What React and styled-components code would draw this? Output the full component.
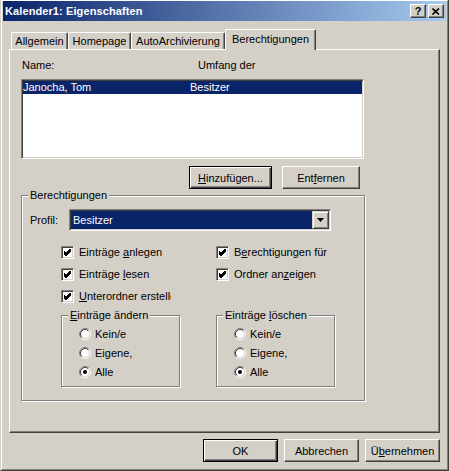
import React from 'react';
import styled, { createGlobalStyle } from 'styled-components';

const FACE = '#d4d0c8';
const NAVY = '#0a246a';

const Global = createGlobalStyle`
  html, body { margin: 0; padding: 0; background: ${FACE}; }
  body { font-family: "Liberation Sans", Arial, sans-serif; font-size: 11px; color: #000; }
  * { box-sizing: border-box; }
`;

const Frame = styled.div`
  width: 449px;
  height: 471px;
  background: ${FACE};
  border-left: 1px solid ${FACE};
  border-right: 1px solid #404040;
  border-bottom: 1px solid #404040;
`;

const FrameInner = styled.div`
  height: 100%;
  display: flex;
  flex-direction: column;
  border-top: 1px solid #fff;
  border-left: 1px solid #fff;
  border-right: 1px solid #808080;
  border-bottom: 1px solid #808080;
  padding: 0 1px;
`;

const TitleBar = styled.div`
  height: 20px;
  flex: none;
  display: flex;
  align-items: center;
  padding: 0 2px 0 2px;
  background: linear-gradient(to right, ${NAVY}, #a6caf0);
  color: #fff;
  font-weight: bold;
  font-size: 11px;
`;

const TitleText = styled.div`
  flex: 1;
  white-space: nowrap;
  letter-spacing: 0.1px;
`;

const CaptionButton = styled.div`
  width: 16px;
  height: 14px;
  margin-left: ${p => p.$gap}px;
  background: ${FACE};
  border: 1px solid;
  border-color: #fff #404040 #404040 #fff;
  box-shadow: inset -1px -1px #808080, inset 1px 1px ${FACE};
  display: flex;
  align-items: center;
  justify-content: center;
  color: #000;
  font-weight: bold;
  font-size: 11px;
  line-height: 12px;
`;

const Body = styled.div`
  flex: 1;
  display: flex;
  flex-direction: column;
  padding: 8px 6px 7px;
`;

const TabStrip = styled.div`
  height: 20px;
  flex: none;
  display: flex;
  align-items: flex-end;
  padding-left: 2px;
  position: relative;
  z-index: 1;
`;

const Tab = styled.div`
  width: ${p => p.$w}px;
  height: ${p => (p.$active ? 21 : 17)}px;
  margin-bottom: ${p => (p.$active ? -1 : 0)}px;
  background: ${FACE};
  border-top: 1px solid #fff;
  border-left: 1px solid #fff;
  border-right: 1px solid #404040;
  border-radius: 2px 2px 0 0;
  box-shadow: inset -1px 0 #808080;
  display: flex;
  align-items: center;
  justify-content: center;
  padding-bottom: ${p => (p.$active ? 2 : 0)}px;
  white-space: nowrap;
`;

const Panel = styled.div`
  flex: 1;
  display: flex;
  flex-direction: column;
  border: 1px solid;
  border-color: #fff #404040 #404040 #fff;
  box-shadow: inset -1px -1px #808080;
  padding: 9px 11px;
`;

const HeaderRow = styled.div`
  width: 343px;
  height: 13px;
  line-height: 13px;
  display: grid;
  grid-template-columns: 176px 1fr;
  padding-left: 1px;
`;

const ListBox = styled.div`
  width: 343px;
  height: 80px;
  margin-top: 7px;
  background: #fff;
  border: 1px solid;
  border-color: #808080 #fff #fff #808080;
  box-shadow: inset 1px 1px #404040, inset -1px -1px ${FACE};
  padding: 1px;
`;

const ListRow = styled.div`
  height: 13px;
  line-height: 13px;
  display: grid;
  grid-template-columns: 167px 1fr;
  background: ${p => (p.$selected ? NAVY : 'transparent')};
  color: ${p => (p.$selected ? '#fff' : '#000')};
`;

const ButtonRow = styled.div`
  width: 343px;
  margin-top: 7px;
  display: flex;
  justify-content: flex-end;
  gap: 10px;
  padding-right: 4px;
`;

const Button = styled.button`
  width: ${p => p.$w}px;
  height: 23px;
  padding: 0;
  margin: 0;
  font: inherit;
  color: #000;
  background: ${FACE};
  border: 1px solid;
  border-color: ${p => (p.$default ? '#000' : '#fff #404040 #404040 #fff')};
  box-shadow: ${p =>
    p.$default
      ? `inset 1px 1px #fff, inset -1px -1px #404040, inset -2px -2px #808080`
      : `inset -1px -1px #808080, inset 1px 1px ${FACE}`};
  display: flex;
  align-items: center;
  justify-content: center;
  white-space: nowrap;
`;

const Group = styled.fieldset`
  width: ${p => p.$w}px;
  margin: 0;
  padding: 0;
  min-inline-size: 0;
  border: 1px solid #808080;
  box-shadow: inset 1px 1px #fff, 1px 1px #fff;
`;

const Legend = styled.legend`
  margin-left: 6px;
  padding: 0 2px;
  line-height: 13px;
  height: 13px;
  background: ${FACE};
  white-space: nowrap;
`;

const GroupBody = styled.div`
  padding: ${p => p.$pad};
`;

const ProfileRow = styled.div`
  display: flex;
  align-items: center;
`;

const ProfileLabel = styled.div`
  width: 39px;
`;

const Combo = styled.div`
  width: 262px;
  height: 22px;
  display: flex;
  background: #fff;
  border: 1px solid;
  border-color: #808080 #fff #fff #808080;
  box-shadow: inset 1px 1px #404040, inset -1px -1px ${FACE};
  padding: 1px;
`;

const ComboValue = styled.div`
  flex: 1;
  background: ${NAVY};
  color: #fff;
  line-height: 18px;
  padding-left: 2px;
`;

const ComboButton = styled.div`
  width: 17px;
  height: 18px;
  background: ${FACE};
  border: 1px solid;
  border-color: ${FACE} #404040 #404040 ${FACE};
  box-shadow: inset 1px 1px #fff, inset -1px -1px #808080;
  display: flex;
  align-items: center;
  justify-content: center;
`;

const TwoCols = styled.div`
  margin-top: ${p => p.$mt}px;
  margin-left: 31px;
  display: grid;
  grid-template-columns: 155px 155px;
  grid-auto-rows: ${p => p.$row || 'auto'};
  align-items: center;
`;

const CheckItem = styled.div`
  display: flex;
  align-items: center;
  gap: 5px;
  white-space: nowrap;
`;

const CheckBoxBox = styled.div`
  width: 13px;
  height: 13px;
  flex: none;
  background: #fff;
  border: 1px solid;
  border-color: #808080 #fff #fff #808080;
  box-shadow: inset 1px 1px #404040, inset -1px -1px ${FACE};
  display: flex;
  align-items: center;
  justify-content: center;
`;

const ItemLabel = styled.span`
  display: block;
  overflow: hidden;
  max-width: ${p => (p.$clip ? `${p.$clip}px` : 'none')};
  line-height: 13px;
`;

const RadioItem = styled.div`
  height: 19px;
  display: flex;
  align-items: center;
  gap: 4px;
`;

const U = styled.span`
  text-decoration: underline;
  text-underline-offset: 1px;
`;

const Footer = styled.div`
  margin-top: 6px;
  display: flex;
  justify-content: flex-end;
  gap: 6px;
`;

function Check({ label, clip }) {
  return (
    <CheckItem>
      <CheckBoxBox>
        <svg width="7" height="7" viewBox="0 0 7 7" shapeRendering="crispEdges">
          <path d="M0 2 L2 4 L6 0 L7 0 L7 3 L2 8 L0 5 Z" fill="#000" transform="translate(-0.5 -0.5)" />
        </svg>
      </CheckBoxBox>
      <ItemLabel $clip={clip}>{label}</ItemLabel>
    </CheckItem>
  );
}

function Radio({ label, checked }) {
  return (
    <RadioItem>
      <svg width="12" height="12" viewBox="0 0 12 12">
        <circle cx="6" cy="6" r="4.5" fill="#fff" />
        <path d="M2.11 9.89 A5.5 5.5 0 0 1 9.89 2.11" fill="none" stroke="#808080" strokeWidth="1" />
        <path d="M9.89 2.11 A5.5 5.5 0 0 1 2.11 9.89" fill="none" stroke="#fff" strokeWidth="1" />
        <path d="M2.82 9.18 A4.5 4.5 0 0 1 9.18 2.82" fill="none" stroke="#404040" strokeWidth="1" />
        <path d="M9.18 2.82 A4.5 4.5 0 0 1 2.82 9.18" fill="none" stroke={FACE} strokeWidth="1" />
        {checked && <circle cx="6" cy="6" r="2" fill="#000" />}
      </svg>
      <span>{label}</span>
    </RadioItem>
  );
}

function RadioGroup({ legend }) {
  return (
    <Group $w={119}>
      <Legend>{legend}</Legend>
      <GroupBody $pad="2px 0 5px 17px">
        <Radio label="Kein/e" />
        <Radio label="Eigene," />
        <Radio label="Alle" checked />
      </GroupBody>
    </Group>
  );
}

export default function App() {
  return (
    <>
      <Global />
      <Frame>
        <FrameInner>
          <TitleBar>
            <TitleText>Kalender1: Eigenschaften</TitleText>
            <CaptionButton $gap={0}>?</CaptionButton>
            <CaptionButton $gap={2}>
              <svg width="8" height="7" viewBox="0 0 8 7">
                <path d="M0.5 0.5 L7 6.5 M7 0.5 L0.5 6.5" stroke="#000" strokeWidth="1.6" />
              </svg>
            </CaptionButton>
          </TitleBar>
          <Body>
            <TabStrip>
              <Tab $w={57}>Allgemein</Tab>
              <Tab $w={63}>Homepage</Tab>
              <Tab $w={94}>AutoArchivierung</Tab>
              <Tab $w={91} $active>Berechtigungen</Tab>
            </TabStrip>
            <Panel>
              <HeaderRow>
                <span>Name:</span>
                <span>Umfang der</span>
              </HeaderRow>
              <ListBox>
                <ListRow $selected>
                  <span>Janocha, Tom</span>
                  <span>Besitzer</span>
                </ListRow>
              </ListBox>
              <ButtonRow>
                <Button $w={83} $default><U>H</U>inzufügen...</Button>
                <Button $w={78}>Ent<U>f</U>ernen</Button>
              </ButtonRow>
              <Group $w={344}>
                <Legend>Berechtigungen</Legend>
                <GroupBody $pad="7px 0 13px 8px">
                  <ProfileRow>
                    <ProfileLabel>Profil:</ProfileLabel>
                    <Combo>
                      <ComboValue>Besitzer</ComboValue>
                      <ComboButton>
                        <svg width="7" height="4" viewBox="0 0 7 4">
                          <path d="M0 0 H7 L3.5 4 Z" fill="#000" />
                        </svg>
                      </ComboButton>
                    </Combo>
                  </ProfileRow>
                  <TwoCols $mt={10} $row="22px">
                    <Check label={<>Einträge <U>a</U>nlegen</>} />
                    <Check label={<>B<U>e</U>rechtigungen für</>} />
                    <Check label={<>Einträge <U>l</U>esen</>} />
                    <Check label={<>Ordner an<U>z</U>eigen</>} />
                    <Check label={<><U>U</U>nterordner erstellen</>} clip={92} />
                  </TwoCols>
                  <TwoCols $mt={2}>
                    <RadioGroup legend={<><U>E</U>inträge ändern</>} />
                    <RadioGroup legend={<>Einträge <U>l</U>öschen</>} />
                  </TwoCols>
                </GroupBody>
              </Group>
            </Panel>
            <Footer>
              <Button $w={75} $default>OK</Button>
              <Button $w={75}>Abbrechen</Button>
              <Button $w={75}>Ü<U>b</U>ernehmen</Button>
            </Footer>
          </Body>
        </FrameInner>
      </Frame>
    </>
  );
}
